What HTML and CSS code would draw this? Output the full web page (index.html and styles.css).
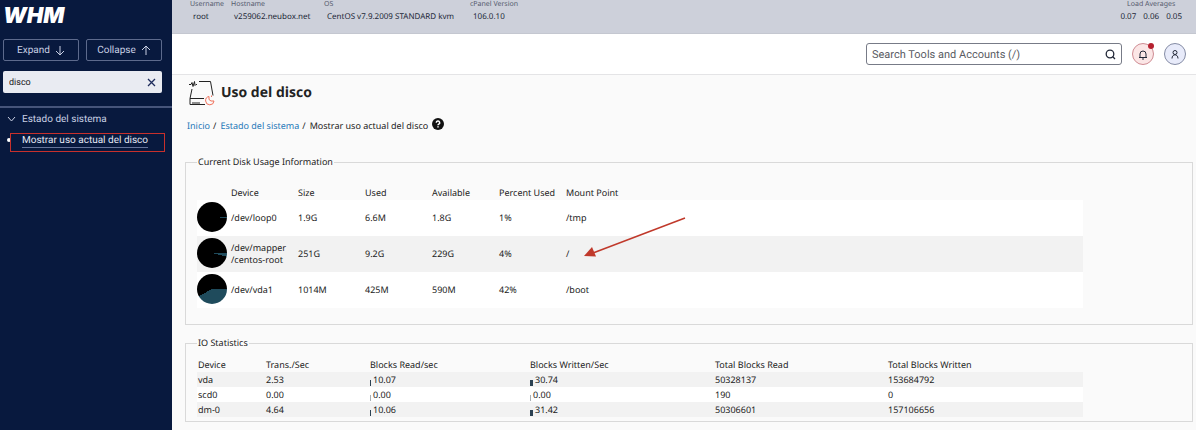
FILE: index.html
```
<!DOCTYPE html>
<html lang="es">
<head>
    <meta charset="UTF-8">
    <title>WHM - Uso del disco</title>
    <link rel="stylesheet" href="styles.css">
</head>
<body>
    <aside class="sidebar">
        <div class="logo">WHM</div>
        <div class="nav-buttons">
            <button type="button">Expand
                <svg width="10" height="11" viewBox="0 0 10 11"><path d="M5 1v9M1 6l4 4 4-4"/></svg>
            </button>
            <button type="button">Collapse
                <svg width="10" height="11" viewBox="0 0 10 11"><path d="M5 10V1M1 5l4-4 4 4"/></svg>
            </button>
        </div>
        <div class="nav-search">
            <input type="text" value="disco" aria-label="Buscar">
            <button type="button" aria-label="Borrar">
                <svg width="9" height="9" viewBox="0 0 9 9"><path d="M1 1l7 7M8 1L1 8"/></svg>
            </button>
        </div>
        <nav>
            <a href="#" class="nav-group">
                <svg width="9" height="6" viewBox="0 0 9 6"><path d="M1 1l3.500 4L8 1"/></svg>
                Estado del sistema
            </a>
            <div class="nav-item">
                <a href="#">Mostrar uso actual del disco</a>
                <span class="highlight"></span>
            </div>
        </nav>
    </aside>

    <div class="page">
        <header class="stats">
            <dl>
                <div class="username"><dt>Username</dt><dd>root</dd></div>
                <div class="host"><dt>Hostname</dt><dd>v259062.neubox.net</dd></div>
                <div class="os"><dt>OS</dt><dd>CentOS v7.9.2009 STANDARD kvm</dd></div>
                <div><dt>cPanel Version</dt><dd>106.0.10</dd></div>
            </dl>
            <dl class="load">
                <div><dt>Load Averages</dt><dd><span>0.07</span><span>0.06</span><span>0.05</span></dd></div>
            </dl>
        </header>

        <div class="toolbar">
            <div class="tool-search">
                <input type="text" placeholder="Search Tools and Accounts (/)" aria-label="Search Tools and Accounts">
                <svg width="11" height="11" viewBox="0 0 11 11"><circle cx="5" cy="5" r="3.800"/><path d="M7.800 7.800L10 10"/></svg>
            </div>
            <button type="button" class="round bell" aria-label="Notifications">
                <svg width="10" height="11" viewBox="0 0 10 11"><path d="M1 8.500h8M2 8.500V5a3 3 0 0 1 6 0v3.500M4 10h2"/></svg>
                <span class="dot"></span>
            </button>
            <button type="button" class="round user" aria-label="Account">
                <svg width="10" height="11" viewBox="0 0 10 11"><circle cx="5" cy="3.500" r="2"/><path d="M2 9.500C2 7 3.500 5.800 5 5.800S8 7 8 9.500"/></svg>
            </button>
        </div>

        <main>
            <h1>
                <svg width="26" height="26" viewBox="0 0 26 26">
                    <path d="M0 4.500h2l1-2 1 4 1.500-5 .5 4 1-1h1M10 1.500h11.500l2.500 14M3 9L1 18.500v6h15M1 18.500h14M4 24v-2M6 24v-2M8 24v-2M10 24v-2"/>
                    <path class="slice" d="M20 16.500a4.200 4.200 0 1 0 5 4.500h-3l-2-1.500zM22.500 15.500v1.500"/>
                </svg>
                Uso del disco
            </h1>
            <div class="breadcrumb">
                <a href="#">Inicio</a><span>/</span><a href="#">Estado del sistema</a><span>/</span>Mostrar uso actual del disco
                <svg width="12" height="12" viewBox="0 0 12 12"><circle cx="6" cy="6" r="6"/><path d="M4.300 4.700a1.700 1.600 0 1 1 2.500 1.400Q6 6.500 6 7.200M6 8.300v1.300"/></svg>
            </div>

            <fieldset class="disk">
                <legend>Current Disk Usage Information</legend>
                <table>
                    <colgroup><col class="pie-col"><col class="c"><col class="c"><col class="c"><col class="c"><col class="c"><col></colgroup>
                    <thead>
                        <tr><th></th><th>Device</th><th>Size</th><th>Used</th><th>Available</th><th>Percent Used</th><th>Mount Point</th></tr>
                    </thead>
                    <tbody>
                        <tr>
                            <td><div class="pie" style="--used: 1%"></div></td>
                            <td>/dev/loop0</td><td>1.9G</td><td>6.6M</td><td>1.8G</td><td>1%</td><td>/tmp</td>
                        </tr>
                        <tr>
                            <td><div class="pie" style="--used: 4%"></div></td>
                            <td>/dev/mapper<br>/centos-root</td><td>251G</td><td>9.2G</td><td>229G</td><td>4%</td>
                            <td class="mount">/
                                <svg class="arrow" width="102" height="42" viewBox="0 0 102 42"><path class="line" d="M101 1L9 36"/><path class="head" d="M0 39L8 30l4 9.500z"/></svg>
                            </td>
                        </tr>
                        <tr>
                            <td><div class="pie" style="--used: 42%"></div></td>
                            <td>/dev/vda1</td><td>1014M</td><td>425M</td><td>590M</td><td>42%</td><td>/boot</td>
                        </tr>
                    </tbody>
                </table>
            </fieldset>

            <fieldset class="io">
                <legend>IO Statistics</legend>
                <table>
                    <colgroup><col class="c1"><col class="c2"><col class="c3"><col class="c4"><col class="c5"><col></colgroup>
                    <thead>
                        <tr><th>Device</th><th>Trans./Sec</th><th>Blocks Read/sec</th><th>Blocks Written/Sec</th><th>Total Blocks Read</th><th>Total Blocks Written</th></tr>
                    </thead>
                    <tbody>
                        <tr><td>vda</td><td>2.53</td><td><i class="bar" style="width: 1px"></i>10.07</td><td><i class="bar" style="width: 3px"></i>30.74</td><td>50328137</td><td>153684792</td></tr>
                        <tr><td>scd0</td><td>0.00</td><td><i class="bar none"></i>0.00</td><td><i class="bar none"></i>0.00</td><td>190</td><td>0</td></tr>
                        <tr><td>dm-0</td><td>4.64</td><td><i class="bar" style="width: 1px"></i>10.06</td><td><i class="bar" style="width: 3px"></i>31.42</td><td>50306601</td><td>157106656</td></tr>
                    </tbody>
                </table>
            </fieldset>
        </main>
    </div>
</body>
</html>
```
FILE: styles.css
```
* {
    box-sizing: border-box;
}
body {
    display: flex;
    min-height: 100vh;
    margin: 0;
    font-family: "Noto Sans", "Open Sans", sans-serif;
    font-size: 9px;
    text-rendering: geometricPrecision;
    color: #222;
    background-color: #fafafa;
}
button, input {
    font-family: inherit;
    text-rendering: inherit;
    margin: 0;
}
svg {
    fill: none;
    stroke: currentColor;
    flex: none;
}
a {
    text-decoration: none;
}

/* sidebar */
.sidebar {
    width: 172px;
    flex: none;
    background-color: #08193e;
    color: #c9d0e4;
    font-family: Inter, sans-serif;
}
.logo {
    height: 39px;
    padding: 5px 3px;
    font-size: 22px;
    line-height: 22px;
    font-weight: 900;
    font-style: italic;
    color: #fff;
}
.nav-buttons {
    display: flex;
    gap: 7px;
    padding: 0 10px 0 3px;
}
.nav-buttons button {
    flex: 1;
    display: flex;
    align-items: center;
    justify-content: center;
    gap: 5px;
    height: 22px;
    padding: 0;
    font-family: Roboto, sans-serif;
    font-size: 10px;
    color: #c9d0e4;
    background: none;
    border: 1px solid #5d6a8c;
    border-radius: 2px;
}
.nav-search {
    display: flex;
    align-items: center;
    height: 22px;
    margin: 10px 10px 13px 3px;
    padding: 0 6px;
    background-color: #e9ebf2;
    border-radius: 2px;
}
.nav-search input {
    flex: 1;
    min-width: 0;
    padding: 1px 0 0;
    border: none;
    background: none;
    font-family: Roboto, sans-serif;
    font-size: 9px;
    color: #222;
}
.nav-search button {
    display: flex;
    padding: 0;
    border: none;
    background: none;
    color: #1d2b5c;
}
.nav-search svg {
    stroke-width: 1.3;
}
.sidebar nav {
    border-top: 2px solid #46547a;
    padding-top: 3px;
    font-family: Roboto, sans-serif;
    font-size: 10px;
}
.nav-group {
    display: flex;
    align-items: center;
    gap: 6px;
    height: 16px;
    padding-left: 7px;
    color: #c9d0e4;
}
.nav-item {
    position: relative;
    padding: 8px 0 0 22px;
    line-height: 12px;
}
.nav-item a {
    display: inline-block;
    color: #e3e7f3;
    border-bottom: 1px solid #66749a;
}
.nav-item::before {
    content: "";
    position: absolute;
    left: 7px;
    top: 11px;
    width: 4px;
    height: 4px;
    border-radius: 50%;
    background-color: #fff;
}
.highlight {
    position: absolute;
    left: 10px;
    top: 6px;
    width: 155px;
    height: 19px;
    border: 1px solid #c8302c;
}

/* top bars */
.page {
    flex: 1;
    min-width: 0;
}
.stats {
    display: flex;
    justify-content: space-between;
    height: 34px;
    padding: 0 14px 0 18px;
    background-color: #cdd0da;
    border-bottom: 1px solid #c4c7d0;
    font-size: 8px;
    white-space: nowrap;
}
.stats dl {
    display: flex;
    gap: 7px;
    margin: 0;
}
.stats dt {
    font-size: 7px;
    line-height: 9px;
    color: #555b6e;
}
.stats dd {
    margin: 0;
    padding: 0 3px;
    line-height: 15px;
    color: #222838;
}
.username {
    width: 34px;
}
.host {
    width: 86px;
}
.os {
    width: 139px;
}
.load {
    text-align: center;
}
.load dd {
    display: flex;
    gap: 7px;
    padding: 0;
}
.toolbar {
    display: flex;
    align-items: center;
    justify-content: flex-end;
    gap: 10px;
    height: 41px;
    padding-right: 10px;
    background-color: #fff;
    border-bottom: 1px solid #e4e4e6;
}
.tool-search {
    display: flex;
    align-items: center;
    width: 256px;
    height: 22px;
    padding: 0 5px;
    border: 1px solid #777b87;
    border-radius: 3px;
    color: #222838;
}
.tool-search input {
    flex: 1;
    min-width: 0;
    padding: 0;
    border: none;
    font-family: Roboto, sans-serif;
    font-size: 11px;
}
.tool-search input::placeholder {
    color: #5a5c63;
}
.tool-search svg {
    stroke-width: 1.3;
}
.round {
    position: relative;
    display: flex;
    align-items: center;
    justify-content: center;
    width: 22px;
    height: 22px;
    padding: 0;
    border-radius: 50%;
    color: #222838;
}
.bell {
    background-color: #fbe6e6;
    border: 1px solid #cf8c93;
}
.user {
    background-color: #e8ebfa;
    border: 1px solid #858ca5;
}
.dot {
    position: absolute;
    top: -1px;
    right: -1px;
    width: 6px;
    height: 6px;
    border-radius: 50%;
    background-color: #b5202e;
}

/* content */
main {
    padding: 5px 3px 8px 13px;
}
h1 {
    display: flex;
    align-items: center;
    gap: 6px;
    height: 26px;
    margin: 0 0 11px 4px;
    font-family: "Open Sans", sans-serif;
    font-size: 14px;
    line-height: 22px;
    color: #222;
}
h1 .slice {
    stroke: #f0705a;
}
.breadcrumb {
    display: flex;
    align-items: center;
    height: 16px;
    margin: 0 0 22px 2px;
}
.breadcrumb a {
    color: #1f78b8;
}
.breadcrumb span {
    margin: 0 4px 0 3px;
}
.breadcrumb svg {
    margin: 0 0 3px 4px;
}
.breadcrumb circle {
    fill: #111;
    stroke: none;
}
.breadcrumb path {
    stroke: #fff;
    stroke-width: 1.5;
}
fieldset {
    min-width: 0;
    margin: 0 0 11px;
    padding: 0 11px;
    border: 1px solid #d9d9d9;
}
legend {
    padding: 0 1px;
    line-height: 14px;
}
table {
    width: 90%;
    table-layout: fixed;
    border-collapse: collapse;
    line-height: 12px;
}
th, td {
    padding: 0;
    text-align: left;
    font-weight: normal;
    white-space: nowrap;
}
.disk {
    padding-bottom: 16px;
}
.disk table {
    margin-top: 17px;
}
.disk th {
    height: 14px;
}
.disk td {
    height: 36px;
}
.disk tbody tr {
    background-color: #fff;
}
.disk tbody tr:nth-child(even) {
    background-color: #f2f2f2;
}
.pie-col {
    width: 34px;
}
.c {
    width: 67px;
}
.pie {
    width: 30px;
    height: 30px;
    margin-bottom: 2px;
    border-radius: 50%;
    background: conic-gradient(from 90deg, #1f4b5c var(--used), #000 0);
}
.mount {
    position: relative;
}
.arrow {
    position: absolute;
    left: 18px;
    top: -19px;
}
.arrow .line {
    stroke: #c0392b;
    stroke-width: 1.5;
}
.arrow .head {
    fill: #c0392b;
    stroke: none;
}
.io {
    padding-bottom: 4px;
}
.io table {
    margin-top: 7px;
}
.io th, .io td {
    height: 15px;
    padding-left: 1px;
}
.io tbody tr {
    background-color: #f2f2f2;
}
.io tbody tr:nth-child(even) {
    background-color: #fff;
}
.c1 {
    width: 68px;
}
.c2 {
    width: 104px;
}
.c3 {
    width: 160px;
}
.c4 {
    width: 185px;
}
.c5 {
    width: 173px;
}
.bar {
    display: inline-block;
    height: 6px;
    margin-right: 2px;
    vertical-align: -3px;
    background-color: #2c4253;
}
.bar.none {
    width: 1px;
    background-color: #a9b0b5;
}
```
